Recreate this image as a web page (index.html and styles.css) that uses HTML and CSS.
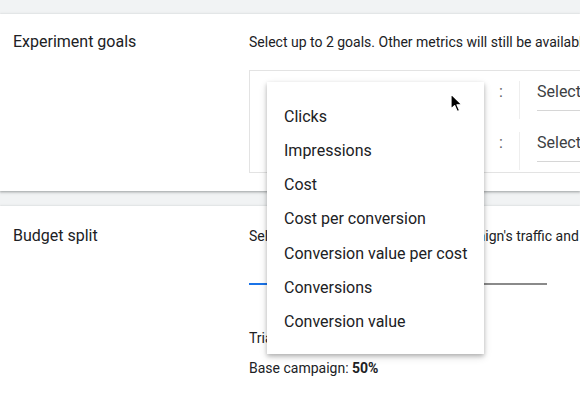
FILE: index.html
```html
<!DOCTYPE html>
<html>
<head>
<meta charset="utf-8">
<link rel="stylesheet" href="styles.css">
</head>
<body>
<div class="page">
  <section class="card card-goals">
    <div class="label">Experiment goals</div>
    <div class="content">
      <div class="desc">Select up to 2 goals. Other metrics will still be available in reports.</div>
      <div class="goal-box">
        <div class="goal-row">
          <div class="metric"></div>
          <div class="colon">:</div>
          <div class="divider"></div>
          <div class="select"><span>Select</span></div>
        </div>
        <div class="goal-row">
          <div class="metric"></div>
          <div class="colon">:</div>
          <div class="divider"></div>
          <div class="select"><span>Select</span></div>
        </div>
      </div>
    </div>
  </section>
  <section class="card card-budget">
    <div class="label">Budget split</div>
    <div class="content">
      <div class="desc">Select the portion of your base campaign's traffic and budget to use for the trial.</div>
      <div class="slider">
        <div class="track-fill"></div>
        <div class="track-rest"></div>
      </div>
      <div class="split-line trial">Trial campaign: <b>50%</b></div>
      <div class="split-line">Base campaign: <b>50%</b></div>
    </div>
  </section>
</div>

<ul class="menu">
  <li>Clicks</li>
  <li>Impressions</li>
  <li>Cost</li>
  <li>Cost per conversion</li>
  <li>Conversion value per cost</li>
  <li>Conversions</li>
  <li>Conversion value</li>
</ul>

<svg class="cursor" width="14" height="21" viewBox="0 0 14 21">
  <path d="M1 1 L1 16 L4.6 12.6 L7.2 18.6 L9.6 17.6 L7 11.8 L12 11.8 Z" fill="#000" stroke="#fff" stroke-width="1.2" stroke-linejoin="round"/>
</svg>
</body>
</html>
```

FILE: styles.css
```css
html, body {
  margin: 0;
  padding: 0;
}
body {
  width: 580px;
  height: 397px;
  overflow: hidden;
  background: #f1f3f4;
  font-family: Roboto, "Liberation Sans", Arial, sans-serif;
  color: #202124;
  position: relative;
}
.page {
  padding-top: 14px;
  display: flex;
  flex-direction: column;
  gap: 15px;
}
.card {
  background: #fff;
  display: flex;
  box-shadow: 0 1px 2px rgba(60,64,67,.35), 0 1px 3px 1px rgba(60,64,67,.12);
}
.card-goals {
  height: 177px;
  padding-top: 18px;
  box-sizing: border-box;
}
.card-budget {
  height: 200px;
  padding-top: 20px;
  box-sizing: border-box;
}
.label {
  width: 236px;
  padding-left: 13px;
  flex: none;
  font-size: 16px;
  line-height: 20px;
}
.content {
  flex: none;
  width: 440px;
  display: flex;
  flex-direction: column;
}
.desc {
  font-size: 14px;
  line-height: 20px;
  white-space: nowrap;
}
.goal-box {
  margin-top: 18px;
  border: 1px solid #e3e3e3;
  height: 103px;
  box-sizing: border-box;
  padding-top: 10px;
  display: flex;
  flex-direction: column;
  gap: 21px;
}
.goal-row {
  display: flex;
  height: 30px;
  align-items: stretch;
}
.metric {
  width: 249px;
  flex: none;
}
.colon {
  width: 20px;
  flex: none;
  font-size: 16px;
  line-height: 22px;
  color: #5f6368;
}
.divider {
  width: 1px;
  flex: none;
  background: #eeeeee;
  margin-bottom: -8px;
}
.select {
  margin-left: 17px;
  width: 150px;
  border-bottom: 1px solid #d6d6d6;
  font-size: 16px;
  line-height: 22px;
  color: #3c4043;
}
.slider {
  margin-top: 37px;
  width: 298px;
  height: 2px;
  display: flex;
}
.track-fill {
  width: 149px;
  background: #1a73e8;
}
.track-rest {
  flex: 1;
  background: #8a8a8a;
}
.split-line {
  font-size: 14px;
  line-height: 20px;
}
.split-line.trial {
  margin-top: 43px;
  margin-bottom: 10px;
}
.split-line b {
  font-weight: 700;
}
.menu {
  position: absolute;
  left: 267px;
  top: 82px;
  width: 217px;
  margin: 0;
  padding: 18px 0 16px;
  list-style: none;
  background: #fff;
  box-shadow: 0 2px 4px rgba(0,0,0,.22), 0 3px 8px rgba(0,0,0,.14);
}
.menu li {
  height: 34px;
  line-height: 34px;
  padding-left: 17px;
  font-size: 16px;
  color: #202124;
  white-space: nowrap;
}
.menu li:nth-child(n+5) {
  position: relative;
  top: 1px;
}
.cursor {
  position: absolute;
  left: 450px;
  top: 93px;
}
```
